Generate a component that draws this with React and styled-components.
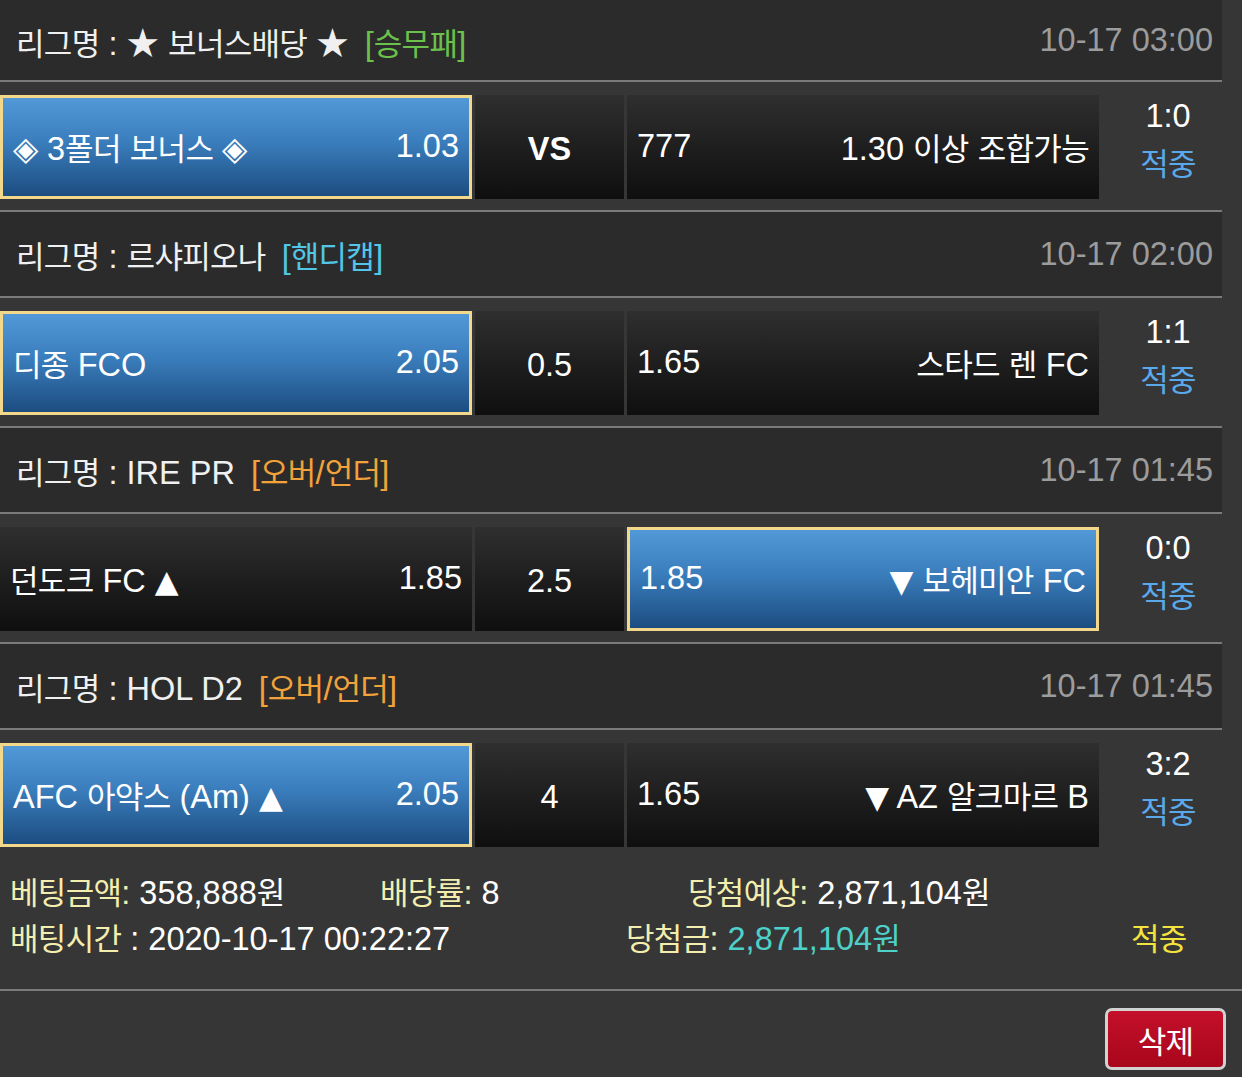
import React, { Fragment } from "react";
import styled, { createGlobalStyle } from "styled-components";

const GlobalStyle = createGlobalStyle`
  html, body {
    margin: 0;
    padding: 0;
    background: #363636;
  }
  body {
    font-family: "Liberation Sans", "Noto Sans CJK KR", sans-serif;
    color: #f2f2f2;
  }
`;

const matches = [
  {
    league: "★ 보너스배당 ★",
    type: "[승무패]",
    typeColor: "#6cc14c",
    date: "10-17 03:00",
    home: "◈ 3폴더 보너스 ◈",
    homeOdds: "1.03",
    mid: "VS",
    midBold: true,
    awayOdds: "777",
    away: "1.30 이상 조합가능",
    pick: "home",
    score: "1:0",
  },
  {
    league: "르샤피오나",
    type: "[핸디캡]",
    typeColor: "#52c6e6",
    date: "10-17 02:00",
    home: "디종 FCO",
    homeOdds: "2.05",
    mid: "0.5",
    awayOdds: "1.65",
    away: "스타드 렌 FC",
    pick: "home",
    score: "1:1",
  },
  {
    league: "IRE PR",
    type: "[오버/언더]",
    typeColor: "#f2a23a",
    date: "10-17 01:45",
    home: "던도크 FC ▲",
    homeOdds: "1.85",
    mid: "2.5",
    awayOdds: "1.85",
    away: "▼ 보헤미안 FC",
    pick: "away",
    score: "0:0",
  },
  {
    league: "HOL D2",
    type: "[오버/언더]",
    typeColor: "#f2a23a",
    date: "10-17 01:45",
    home: "AFC 아약스 (Am) ▲",
    homeOdds: "2.05",
    mid: "4",
    awayOdds: "1.65",
    away: "▼ AZ 알크마르 B",
    pick: "home",
    score: "3:2",
  },
];

// split a string into hangul / arrow / other runs so each gets its own metrics
function T({ children }) {
  const parts = String(children).split(/([\u3131-\uD7A3]+|[▲▼]+)/);
  return parts.map((p, i) => {
    if (!p) return null;
    if (/[\u3131-\uD7A3]/.test(p)) return <Ko key={i}>{p}</Ko>;
    if (/[▲▼]/.test(p)) return <Arrow key={i}>{p}</Arrow>;
    return <Fragment key={i}>{p}</Fragment>;
  });
}

export default function App() {
  return (
    <Page>
      <GlobalStyle />
      <List>
        {matches.map((m, i) => (
          <Fragment key={i}>
            <LeagueHeader $first={i === 0}>
              <LeagueName>
                <T>{"리그명 : " + m.league}</T>
                <BetType $color={m.typeColor}>
                  <T>{m.type}</T>
                </BetType>
              </LeagueName>
              <MatchDate>{m.date}</MatchDate>
            </LeagueHeader>
            <Rule />
            <MatchRow>
              <OddsCell $picked={m.pick === "home"}>
                <span>
                  <T>{m.home}</T>
                </span>
                <span>{m.homeOdds}</span>
              </OddsCell>
              <MidCell $bold={m.midBold}>{m.mid}</MidCell>
              <OddsCell $picked={m.pick === "away"}>
                <span>{m.awayOdds}</span>
                <span>
                  <T>{m.away}</T>
                </span>
              </OddsCell>
              <ScoreCol>
                <Score>{m.score}</Score>
                <Result>
                  <Ko>적중</Ko>
                </Result>
              </ScoreCol>
            </MatchRow>
            {i < matches.length - 1 && <Rule />}
          </Fragment>
        ))}
      </List>

      <Summary>
        <SummaryLine $cols="370px 308px 1fr">
          <span>
            <Label>
              <Ko>베팅금액</Ko>:
            </Label>{" "}
            358,888<Ko>원</Ko>
          </span>
          <span>
            <Label>
              <Ko>배당률</Ko>:
            </Label>{" "}
            8
          </span>
          <span>
            <Label>
              <Ko>당첨예상</Ko>:
            </Label>{" "}
            2,871,104<Ko>원</Ko>
          </span>
        </SummaryLine>
        <SummaryLine $cols="616px 505px 1fr">
          <span>
            <Label>
              <Ko>배팅시간</Ko>
            </Label>{" "}
            : 2020-10-17 00:22:27
          </span>
          <span>
            <Label>
              <Ko>당첨금</Ko>:
            </Label>{" "}
            <Won>
              2,871,104<Ko>원</Ko>
            </Won>
          </span>
          <Hit>
            <Ko>적중</Ko>
          </Hit>
        </SummaryLine>
      </Summary>
      <FullRule />
      <Actions>
        <DeleteButton>
          <Ko>삭제</Ko>
        </DeleteButton>
      </Actions>
    </Page>
  );
}

const Page = styled.div`
  width: 1242px;
  min-height: 1077px;
  background: #363636;
  font-size: 32.5px;
`;

const Ko = styled.span`
  font-family: "Noto Sans CJK KR", sans-serif;
  font-size: 31px;
  letter-spacing: -0.7px;
`;

const Arrow = styled.span`
  font-family: "DejaVu Sans", sans-serif;
  font-size: 31px;
`;

const List = styled.div`
  width: 1222px;
`;

const LeagueHeader = styled.div`
  height: ${(p) => (p.$first ? "80px" : "84px")};
  background: #2b2b2b;
  display: flex;
  align-items: center;
  justify-content: space-between;
  padding: 0 9px 0 16px;
  box-sizing: border-box;
`;

const LeagueName = styled.div`
  color: #f0f0f0;
  white-space: nowrap;
`;

const BetType = styled.span`
  color: ${(p) => p.$color};
  margin-left: 16px;
`;

const MatchDate = styled.div`
  color: #9c9c9c;
`;

const Rule = styled.div`
  height: 2px;
  background: #7b7b7b;
`;

const FullRule = styled.div`
  height: 2px;
  background: #7b7b7b;
  width: 1242px;
`;

const MatchRow = styled.div`
  height: 128px;
  padding: 13px 0 11px;
  box-sizing: border-box;
  display: flex;
  gap: 3px;
`;

const OddsCell = styled.div`
  width: 472px;
  height: 104px;
  box-sizing: border-box;
  display: flex;
  align-items: center;
  justify-content: space-between;
  padding: 0 10px 2px;
  white-space: nowrap;
  color: #ffffff;
  border: ${(p) => (p.$picked ? "3px solid #f3d88c" : "none")};
  background: ${(p) =>
    p.$picked
      ? "linear-gradient(to bottom, #5299d8 0%, #3a7dbc 45%, #1c4d80 100%)"
      : "linear-gradient(to bottom, #2f2f2f 0%, #1b1b1b 60%, #0f0f0f 100%)"};
`;

const MidCell = styled.div`
  width: 149px;
  height: 104px;
  display: flex;
  align-items: center;
  justify-content: center;
  padding-top: 4px;
  box-sizing: border-box;
  color: #ffffff;
  font-weight: ${(p) => (p.$bold ? 700 : 400)};
  background: linear-gradient(to bottom, #2f2f2f 0%, #1b1b1b 60%, #0f0f0f 100%);
`;

const ScoreCol = styled.div`
  flex: 1;
  display: flex;
  flex-direction: column;
  align-items: center;
  justify-content: center;
  padding: 0 0 14px 12px;
  line-height: 46px;
`;

const Score = styled.div`
  color: #ffffff;
`;

const Result = styled.div`
  color: #5aa9ea;
`;

const Summary = styled.div`
  height: 131px;
  padding: 10px 0 0 10px;
  box-sizing: border-box;
`;

const SummaryLine = styled.div`
  display: grid;
  grid-template-columns: ${(p) => p.$cols};
  height: 46px;
  line-height: 46px;
  color: #ffffff;
  white-space: nowrap;
`;

const Label = styled.span`
  color: #f4eeae;
`;

const Won = styled.span`
  color: #4ed1c9;
`;

const Hit = styled.span`
  color: #f3e33d;
`;

const Actions = styled.div`
  display: flex;
  justify-content: flex-end;
  padding: 17px 16px 0 0;
`;

const DeleteButton = styled.button`
  width: 121px;
  height: 62px;
  border: 3px solid #d2d2d2;
  border-radius: 7px;
  background: linear-gradient(to bottom, #c4102a, #a8061c);
  color: #ffffff;
  font-family: inherit;
  font-size: 31px;
  cursor: pointer;
  padding: 0;
`;
